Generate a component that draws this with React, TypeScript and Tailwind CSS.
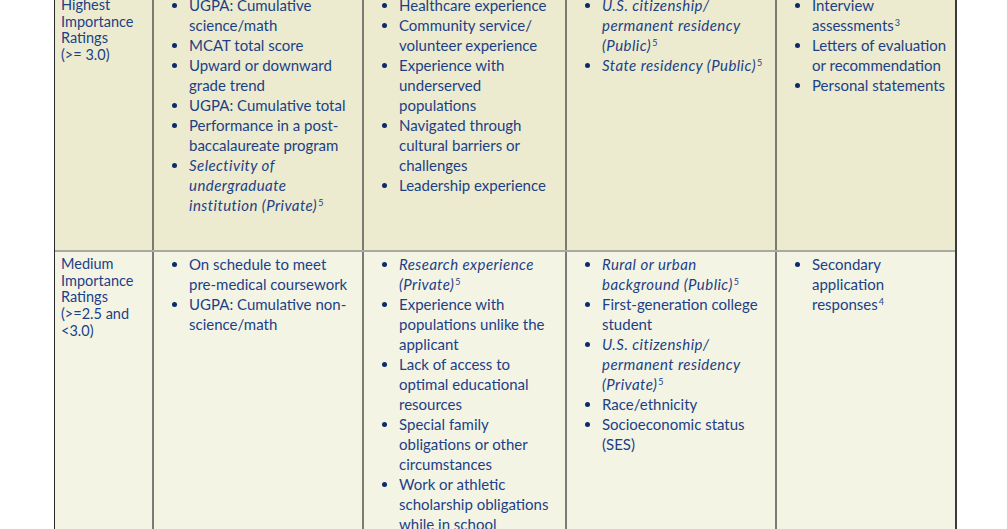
import React from "react";

type Line = { t: string; sup?: string };
type Item = { lines: (string | Line)[]; italic?: boolean };

const Bullet = ({ item }: { item: Item }) => (
  <div className="flex">
    <div className="w-[17px] h-[20px] shrink-0 flex items-center">
      <span className="block w-[5px] h-[5px] rounded-full bg-[#0b2c69]" />
    </div>
    <div className={item.italic ? "italic tracking-[0.45px]" : ""}>
      {item.lines.map((l, i) => {
        const ln = typeof l === "string" ? { t: l } : l;
        return (
          <div key={i} className="whitespace-nowrap h-[20px] leading-[20px]">
            {ln.t}
            {ln.sup && (
              <sup className="text-[9px] not-italic ml-[1px] top-[-0.6em] tracking-normal">{ln.sup}</sup>
            )}
          </div>
        );
      })}
    </div>
  </div>
);

const Cell = ({ items, w, last }: { items: Item[]; w: string; last?: boolean }) => (
  <div className={`${w} shrink-0 pl-[18px] pt-[2px] ${last ? "" : "border-r-2 border-[#7b7b73]"}`}>
    {items.map((it, i) => (
      <Bullet key={i} item={it} />
    ))}
  </div>
);

const LabelCell = ({ lines }: { lines: string[] }) => (
  <div className="w-[99px] shrink-0 pl-[6px] pt-[4px] border-r-2 border-[#7b7b73] text-[14.5px] leading-[16.7px]">
    {lines.map((l, i) => (
      <div key={i} className="whitespace-nowrap">
        {l}
      </div>
    ))}
  </div>
);

export default function App() {
  const row1 = {
    c2: [
      { lines: ["UGPA: Cumulative", "science/math"] },
      { lines: ["MCAT total score"] },
      { lines: ["Upward or downward", "grade trend"] },
      { lines: ["UGPA: Cumulative total"] },
      { lines: ["Performance in a post-", "baccalaureate program"] },
      { lines: ["Selectivity of", "undergraduate", { t: "institution (Private)", sup: "5" }], italic: true },
    ],
    c3: [
      { lines: ["Healthcare experience"] },
      { lines: ["Community service/", "volunteer experience"] },
      { lines: ["Experience with", "underserved", "populations"] },
      { lines: ["Navigated through", "cultural barriers or", "challenges"] },
      { lines: ["Leadership experience"] },
    ],
    c4: [
      { lines: ["U.S. citizenship/", "permanent residency", { t: "(Public)", sup: "5" }], italic: true },
      { lines: [{ t: "State residency (Public)", sup: "5" }], italic: true },
    ],
    c5: [
      { lines: ["Interview", { t: "assessments", sup: "3" }] },
      { lines: ["Letters of evaluation", "or recommendation"] },
      { lines: ["Personal statements"] },
    ],
  };
  const row2 = {
    c2: [
      { lines: ["On schedule to meet", "pre-medical coursework"] },
      { lines: ["UGPA: Cumulative non-", "science/math"] },
    ],
    c3: [
      { lines: ["Research experience", { t: "(Private)", sup: "5" }], italic: true },
      { lines: ["Experience with", "populations unlike the", "applicant"] },
      { lines: ["Lack of access to", "optimal educational", "resources"] },
      { lines: ["Special family", "obligations or other", "circumstances"] },
      { lines: ["Work or athletic", "scholarship obligations", "while in school"] },
    ],
    c4: [
      { lines: ["Rural or urban", { t: "background (Public)", sup: "5" }], italic: true },
      { lines: ["First-generation college", "student"] },
      { lines: ["U.S. citizenship/", "permanent residency", { t: "(Private)", sup: "5" }], italic: true },
      { lines: ["Race/ethnicity"] },
      { lines: ["Socioeconomic status", "(SES)"] },
    ],
    c5: [{ lines: ["Secondary", "application", { t: "responses", sup: "4" }] }],
  };

  return (
    <div
      className="w-[1007px] h-[529px] overflow-hidden bg-white text-[#1c3f86] text-[15px]"
      style={{ fontFamily: "Lato, 'Open Sans', sans-serif" }}
    >
      <div className="ml-[54px] mt-[-7px] w-[903px] border-l border-r-2 border-l-[#2a2a2a] border-r-[#3a3a3a]">
        <div className="flex h-[259px] bg-[#ecebcf] border-b-2 border-[#a9a9a1]">
          <LabelCell lines={["Highest", "Importance", "Ratings", "(>= 3.0)"]} />
          <Cell w="w-[210px]" items={row1.c2} />
          <Cell w="w-[203px]" items={row1.c3} />
          <Cell w="w-[210px]" items={row1.c4} />
          <Cell w="w-[178px]" items={row1.c5} last />
        </div>
        <div className="flex h-[400px] bg-[#f4f4e5]">
          <LabelCell lines={["Medium", "Importance", "Ratings", "(>=2.5 and", "<3.0)"]} />
          <Cell w="w-[210px]" items={row2.c2} />
          <Cell w="w-[203px]" items={row2.c3} />
          <Cell w="w-[210px]" items={row2.c4} />
          <Cell w="w-[178px]" items={row2.c5} last />
        </div>
      </div>
    </div>
  );
}
